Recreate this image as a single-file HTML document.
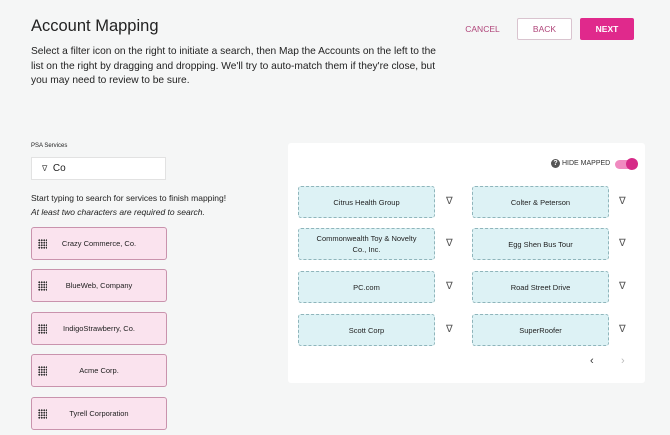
<!DOCTYPE html>
<html><head><style>
body{margin:0;width:670px;height:435px;background:#f5f6f6;font-family:"Liberation Sans",sans-serif;color:#222;position:relative;overflow:hidden}
.a{position:absolute}
h1{position:absolute;left:31px;top:17px;margin:0;font-size:16.5px;font-weight:normal;color:#222}
.p{left:31px;top:45px;white-space:nowrap;font-size:10.2px;line-height:14.6px;color:#222}
.btn{position:absolute;top:18px;height:22px;font-size:8.5px;display:flex;align-items:center;justify-content:center;box-sizing:border-box;border-radius:2px}
.pk{position:absolute;left:31px;width:136px;height:33px;background:#fae3ee;border:1px solid #c993ad;border-radius:3px;box-sizing:border-box;font-size:7.5px;display:flex;align-items:center;justify-content:center}
.dots{position:absolute;left:6px;top:11px;width:9px;height:10px;background-image:radial-gradient(circle,#333 0.9px,transparent 1.1px);background-size:2.5px 2.5px}
.bl{position:absolute;width:137px;height:32px;background:#ddf2f5;border:1px dashed #8fb5bb;border-radius:3px;box-sizing:border-box;font-size:7.5px;display:flex;align-items:center;justify-content:center;text-align:center;line-height:11px}
.f{position:absolute;font-size:10px;color:#555}
</style></head><body>
<h1>Account Mapping</h1>
<div class="a p">Select a filter icon on the right to initiate a search, then Map the Accounts on the left to the<br>list on the right by dragging and dropping. We'll try to auto-match them if they're close, but<br>you may need to review to be sure.</div>
<div class="btn" style="left:460px;width:45px;color:#b0457a">CANCEL</div>
<div class="btn" style="left:517px;width:55px;border:1px solid #d9c4cf;background:#fff;color:#b0457a">BACK</div>
<div class="btn" style="left:580px;width:54px;background:#e0298c;color:#fff;font-weight:bold">NEXT</div>
<div class="a" style="left:31px;top:143px;font-size:6px">PSA Services</div>
<div class="a" style="left:31px;top:157px;width:135px;height:23px;background:#fff;border:1px solid #e2e2e2;box-sizing:border-box;font-size:10px;line-height:21px;padding-left:10px"><span style="font-size:8px;color:#555">∇</span>&nbsp; Co</div>
<div class="a" style="left:31px;top:191px;font-size:8.5px;line-height:14px">Start typing to search for services to finish mapping!<br><i>At least two characters are required to search.</i></div>
<div class="pk" style="top:227px"><div class="dots"></div>Crazy Commerce, Co.</div>
<div class="pk" style="top:269px"><div class="dots"></div>BlueWeb, Company</div>
<div class="pk" style="top:312px"><div class="dots"></div>IndigoStrawberry, Co.</div>
<div class="pk" style="top:354px"><div class="dots"></div>Acme Corp.</div>
<div class="pk" style="top:397px"><div class="dots"></div>Tyrell Corporation</div>
<div class="a" style="left:288px;top:143px;width:357px;height:240px;background:#fff;border-radius:3px"></div>
<div class="a" style="left:551px;top:159px;width:9px;height:9px;border-radius:50%;background:#555;color:#fff;font-size:7px;text-align:center;line-height:9px;font-weight:bold">?</div>
<div class="a" style="left:562px;top:160px;font-size:7px;color:#333">HIDE MAPPED</div>
<div class="a" style="left:615px;top:160px;width:20px;height:9px;border-radius:5px;background:#f08ac0"></div>
<div class="a" style="left:626px;top:158px;width:12px;height:12px;border-radius:50%;background:#d62a88"></div>
<div class="bl" style="left:298px;top:186px">Citrus Health Group</div>
<div class="bl" style="left:472px;top:186px">Colter &amp; Peterson</div>
<div class="bl" style="left:298px;top:228px">Commonwealth Toy &amp; Novelty<br>Co., Inc.</div>
<div class="bl" style="left:472px;top:228px">Egg Shen Bus Tour</div>
<div class="bl" style="left:298px;top:271px">PC.com</div>
<div class="bl" style="left:472px;top:271px">Road Street Drive</div>
<div class="bl" style="left:298px;top:314px">Scott Corp</div>
<div class="bl" style="left:472px;top:314px">SuperRoofer</div>
<div class="f" style="left:446px;top:196px">∇</div><div class="f" style="left:619px;top:196px">∇</div>
<div class="f" style="left:446px;top:238px">∇</div><div class="f" style="left:619px;top:238px">∇</div>
<div class="f" style="left:446px;top:281px">∇</div><div class="f" style="left:619px;top:281px">∇</div>
<div class="f" style="left:446px;top:324px">∇</div><div class="f" style="left:619px;top:324px">∇</div>
<div class="a" style="left:590px;top:355px;font-size:11px;color:#333">‹</div>
<div class="a" style="left:621px;top:355px;font-size:11px;color:#bbb">›</div>
</body></html>
